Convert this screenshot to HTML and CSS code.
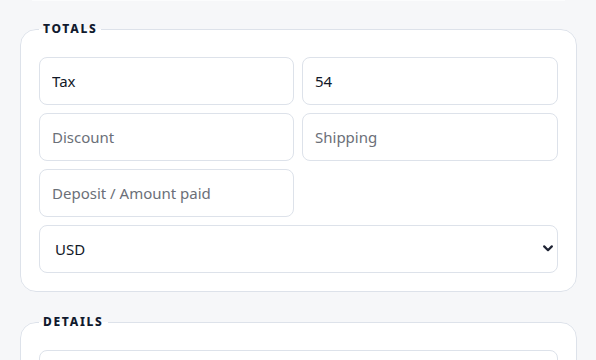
FILE: index.html
```html
<!DOCTYPE html>
<html lang="en">
<head>
    <meta charset="UTF-8">
    <meta name="viewport" content="width=device-width, initial-scale=1.0">
    <title>Invoice - Totals</title>
    <link rel="stylesheet" href="styles.css">
</head>
<body>
    <div class="page">
        <div class="prev-edge"></div>

        <fieldset class="section">
            <legend>Totals</legend>
            <div class="field-grid">
                <input type="text" class="field" placeholder="Tax Label" value="Tax">
                <input type="text" class="field" placeholder="Tax" value="54">
                <input type="text" class="field" placeholder="Discount">
                <input type="text" class="field" placeholder="Shipping">
                <input type="text" class="field" placeholder="Deposit / Amount paid">
                <div></div>
                <div class="select-wrap">
                    <select class="field select">
                        <option>USD</option>
                        <option>EUR</option>
                        <option>GBP</option>
                    </select>
                    <svg class="chevron" width="10" height="7" viewBox="0 0 10 7">
                        <path d="M1.2 1.4 L5 5.2 L8.8 1.4" fill="none" stroke="#1e2333" stroke-width="2.2" stroke-linecap="round" stroke-linejoin="round"/>
                    </svg>
                </div>
            </div>
        </fieldset>

        <fieldset class="section">
            <legend>Details</legend>
            <div class="field-grid">
                <input type="text" class="field full" placeholder="Notes">
            </div>
        </fieldset>
    </div>
</body>
</html>
```

FILE: styles.css
```css
body {
    margin: 0;
    padding: 0;
    background-color: #f6f7f9;
    font-family: "Noto Sans", "Open Sans", Arial, sans-serif;
    overflow: hidden;
}
.page {
    padding: 0 19px 0 20px;
}
.prev-edge {
    height: 1px;
    margin: 0 12px 0 12px;
    background-color: #fbfcfd;
}

/* Sections */
.section {
    margin: 20px 0 22px 0;
    padding: 20px 18px 18px 18px;
    background: white;
    border: 1px solid #dde2ea;
    border-radius: 16px;
}
.section legend {
    margin-left: 0;
    padding: 0 4px 0 4px;
    font-size: 12px;
    line-height: 16px;
    font-weight: 800;
    letter-spacing: 1.7px;
    text-transform: uppercase;
    color: #111a2e;
}

.field-grid {
    display: grid;
    grid-template-columns: 255px 1fr;
    gap: 8px;
}
.field {
    box-sizing: border-box;
    width: 100%;
    height: 48px;
    padding: 0 12px;
    font-family: inherit;
    font-size: 15px;
    color: #111827;
    background: white;
    border: 1px solid #dde2ea;
    border-radius: 8px;
    outline: none;
}
.field::placeholder {
    color: #6b6f78;
}
.full {
    grid-column: 1 / 3;
}

/* Currency select */
.select-wrap {
    grid-column: 1 / 3;
    position: relative;
}
.select {
    appearance: none;
    -webkit-appearance: none;
    padding-left: 15px;
    cursor: pointer;
}
.chevron {
    position: absolute;
    right: 5px;
    top: 20px;
    pointer-events: none;
}
```
